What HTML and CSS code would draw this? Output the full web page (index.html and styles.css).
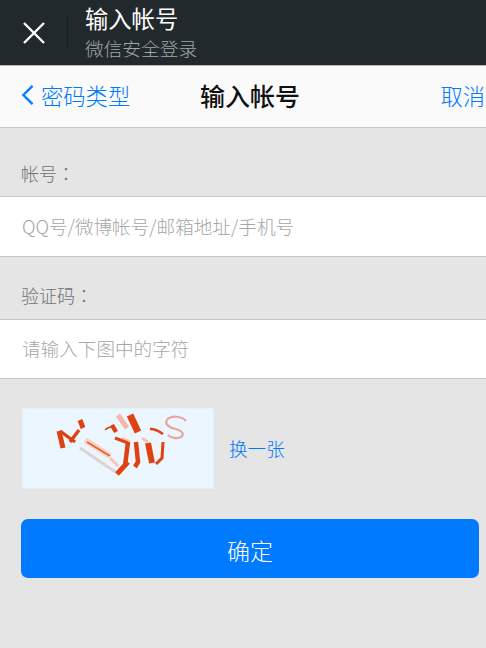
FILE: index.html
```html
<!DOCTYPE html>
<html>
<head>
  <title>输入帐号</title>
  <link rel="stylesheet" href="styles.css">
</head>
<body>
  <header class="title-bar">
    <svg class="close-icon" xmlns="http://www.w3.org/2000/svg" viewBox="0 0 22 22" fill="none" stroke="#ffffff" stroke-width="2.4">
      <path d="M1 1l20 20M21 1L1 21"></path>
    </svg>
    <div class="title-divider"></div>
    <div class="title-text">
      <div class="title-main">输入帐号</div>
      <div class="title-sub">微信安全登录</div>
    </div>
  </header>

  <nav class="nav-bar">
    <a class="nav-back">
      <svg class="back-icon" xmlns="http://www.w3.org/2000/svg" viewBox="0 0 14 24" fill="none" stroke="#0a7cff" stroke-width="2.6">
        <path d="M12.5 2L2.5 12l10 10"></path>
      </svg>
      密码类型
    </a>
    <div class="nav-title">输入帐号</div>
    <a class="nav-cancel">取消</a>
  </nav>

  <div class="field-label first">帐号<span class="colon">：</span></div>
  <div class="field account">QQ号/微博帐号/邮箱地址/手机号</div>

  <div class="field-label">验证码<span class="colon">：</span></div>
  <div class="field">请输入下图中的字符</div>

  <div class="captcha-row">
    <svg class="captcha" xmlns="http://www.w3.org/2000/svg" viewBox="0 0 192 81" fill="none">
      <rect width="192" height="81" fill="#dff3fc"></rect>
      <rect x="1" y="1" width="190" height="79" fill="#ecf6fe"></rect>
      <g class="captcha-marks">
        <!-- pale shadow under the characters -->
        <path d="M58 40l37 25" stroke="#dcd3d3" stroke-width="3"></path>
        <path d="M63 32l25 16" stroke="#f8d3c4" stroke-width="6"></path>
        <path d="M96 7l9 13" stroke="#f3b9a8" stroke-width="5"></path>
        <path d="M164 13c-4-5-15-6-19-1-3 5 4 8 9 9 6 2 9 5 5 8-4 2-10 1-13-2" stroke="#e6a9a2" stroke-width="2.2"></path>
        <path d="M88 50l8 8M100 30l8 4M120 30l6 4" stroke="#f6c5b4" stroke-width="3"></path>
        <!-- red strokes -->
        <path d="M37 23l4 17" stroke="#df4212" stroke-width="5"></path>
        <path d="M38 23l15 11M48 34l9-12" stroke="#df4212" stroke-width="3.4"></path>
        <path d="M58 12l3 8" stroke="#df4212" stroke-width="5"></path>
        <path d="M65 34l23 14" stroke="#e8612f" stroke-width="1.6"></path>
        <path d="M90 17l4 7" stroke="#df4212" stroke-width="4.5"></path>
        <path d="M83 22c2-2 5-3 7-3" stroke="#df4212" stroke-width="1.4"></path>
        <path d="M108 7l8 17" stroke="#df4212" stroke-width="7"></path>
        <path d="M93 30l13 5" stroke="#df4212" stroke-width="3"></path>
        <path d="M106 34l-3 24" stroke="#df4212" stroke-width="4.5"></path>
        <path d="M95 66l11-12" stroke="#df4212" stroke-width="5"></path>
        <path d="M114 34l2 20-3 5" stroke="#df4212" stroke-width="4.5"></path>
        <path d="M126 35l4 20" stroke="#df4212" stroke-width="6"></path>
        <path d="M141 34l-1 16-6 6" stroke="#df4212" stroke-width="3"></path>
        <path d="M128 21c4 0 9 2 13 5" stroke="#df4212" stroke-width="2.4"></path>
      </g>
    </svg>
    <a class="captcha-change">换一张</a>
  </div>

  <button class="submit">确定</button>
</body>
</html>
```

FILE: styles.css
```css
body {
  margin: 0;
  height: 648px;
  overflow: hidden;
  background-color: #e5e5e5;
  font-family: "Noto Sans CJK SC", "Liberation Sans", sans-serif;
  font-weight: 300;
}

.title-bar {
  height: 65px;
  display: flex;
  align-items: center;
  background-color: #22292d;
}

.close-icon {
  width: 22px;
  height: 22px;
  margin-left: 23px;
  flex: none;
}

.title-divider {
  width: 1px;
  height: 33px;
  margin-left: 22px;
  background-color: #181d20;
}

.title-text {
  margin-left: 17px;
}

.title-main {
  font-size: 23.3px;
  font-weight: 400;
  line-height: 29px;
  color: #ffffff;
}

.title-sub {
  font-size: 18.7px;
  line-height: 29px;
  color: #a3a7a9;
}

.nav-bar {
  height: 63px;
  box-sizing: border-box;
  padding-bottom: 3px;
  display: flex;
  align-items: center;
  position: relative;
  background-color: #fafafa;
  border-top: 1px solid #b8b8b8;
  border-bottom: 1px solid #c4c4c4;
  font-size: 22.3px;
  color: #0079ff;
}

.nav-back {
  display: flex;
  align-items: center;
  margin-left: 21px;
}

.back-icon {
  width: 13px;
  height: 22px;
  margin-right: 7px;
}

.nav-title {
  position: absolute;
  left: 200px;
  font-size: 25px;
  font-weight: 500;
  color: #111111;
}

.nav-cancel {
  margin-left: auto;
  margin-right: 1px;
}

.field-label {
  height: 62px;
  box-sizing: border-box;
  padding: 26px 0 0 21px;
  font-size: 18px;
  line-height: 24px;
  color: #707070;
}

.field-label.first {
  height: 68px;
  padding-top: 33px;
}

.colon {
  font-family: "Noto Sans CJK TC", sans-serif;
}

.field {
  height: 60px;
  box-sizing: border-box;
  padding: 0 0 3px 22px;
  display: flex;
  align-items: center;
  background-color: #ffffff;
  border-top: 1px solid #c6c6cc;
  border-bottom: 1px solid #c6c6cc;
  font-size: 18.6px;
  color: #a6a6a6;
}

.field.account {
  height: 61px;
}

.captcha-row {
  display: flex;
  align-items: center;
  margin: 29px 0 0 22px;
}

.captcha {
  width: 192px;
  height: 81px;
  flex: none;
}

.captcha-marks {
  filter: blur(0.6px);
}

.captcha-change {
  margin: 0 0 3px 15px;
  font-size: 18.6px;
  color: #0079ff;
}

.submit {
  display: block;
  width: 458px;
  height: 59px;
  margin: 30px 0 0 21px;
  padding: 2px 0 0;
  border: none;
  border-radius: 7px;
  background-color: #007aff;
  color: #ffffff;
  font-family: inherit;
  font-weight: 300;
  font-size: 23px;
}
```
